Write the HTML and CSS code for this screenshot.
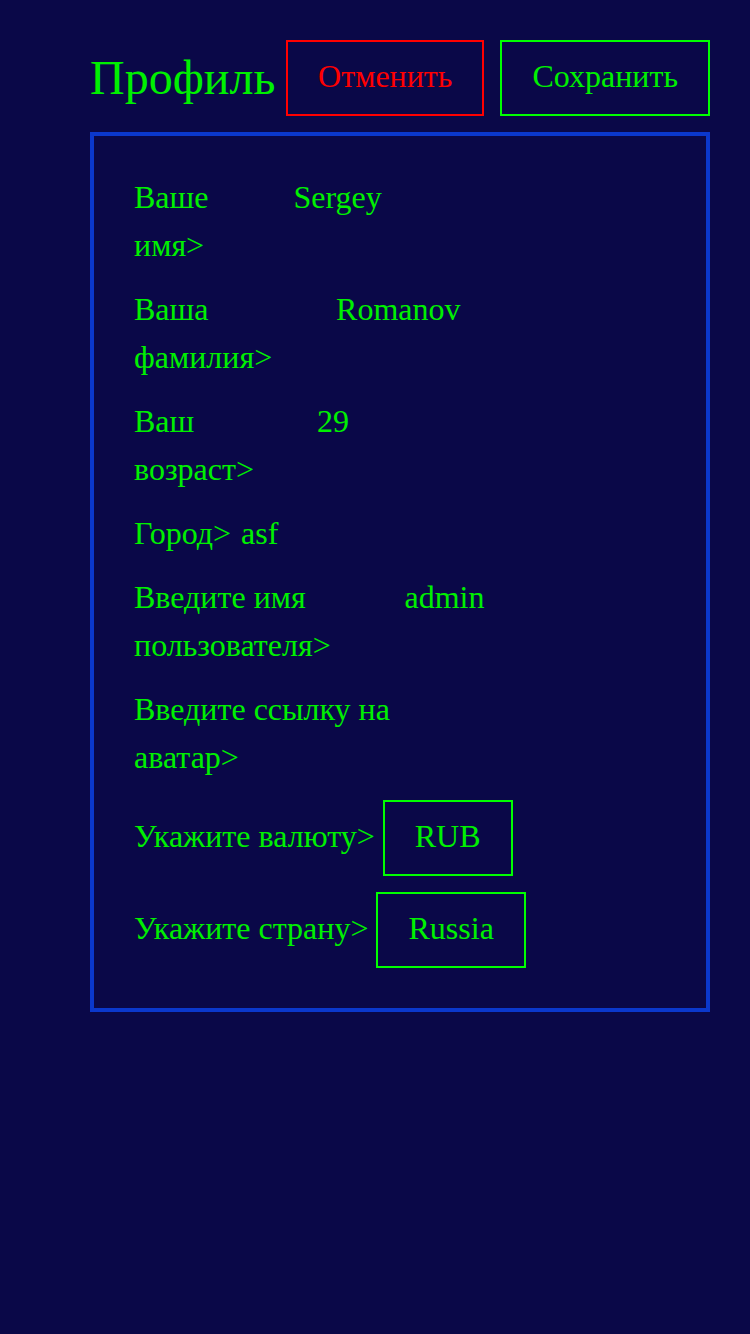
FILE: index.html
```html
<!DOCTYPE html>
<html lang="ru">
<head>
<meta charset="utf-8">
<title>Профиль</title>
<link rel="stylesheet" href="styles.css">
</head>
<body>
<div class="page">
  <header class="header">
    <h1 class="title">Профиль</h1>
    <button class="btn btn-cancel">Отменить</button>
    <button class="btn btn-save">Сохранить</button>
  </header>
  <section class="card">
    <div class="row">
      <span class="label">Ваше имя&gt;</span>
      <span class="value">Sergey</span>
    </div>
    <div class="row">
      <span class="label">Ваша фамилия&gt;</span>
      <span class="value">Romanov</span>
    </div>
    <div class="row">
      <span class="label">Ваш возраст&gt;</span>
      <span class="value">29</span>
    </div>
    <div class="row row-city">
      <span class="label">Город&gt;</span>
      <span class="value">asf</span>
    </div>
    <div class="row">
      <span class="label">Введите имя пользователя&gt;</span>
      <span class="value">admin</span>
    </div>
    <div class="row">
      <span class="label">Введите ссылку на аватар&gt;</span>
      <span class="value"></span>
    </div>
    <div class="row row-select row-first-select">
      <span class="label">Укажите валюту&gt;</span>
      <span class="box">RUB</span>
    </div>
    <div class="row row-select">
      <span class="label">Укажите страну&gt;</span>
      <span class="box">Russia</span>
    </div>
  </section>
</div>
</body>
</html>
```

FILE: styles.css
```css
html, body {
  margin: 0;
  padding: 0;
  background: #0a0848;
  min-height: 100%;
}

body {
  font-family: "Liberation Serif", "Times New Roman", serif;
  color: #00f000;
  width: 750px;
  height: 1334px;
}

.page {
  box-sizing: border-box;
  padding: 40px 40px 0 90px;
  display: flex;
  flex-direction: column;
  gap: 16px;
}

.header {
  display: flex;
  align-items: center;
}

.title {
  flex: none;
  margin: 0;
  font-size: 48px;
  font-weight: normal;
  line-height: 56px;
  color: #00f000;
}

.btn {
  font-family: inherit;
  font-size: 32px;
  line-height: 48px;
  padding: 10px 30px 14px;
  background: transparent;
  border: 2px solid;
  margin: 0;
}

.btn-cancel {
  margin-left: auto;
  color: #ff0000;
  border-color: #ff0000;
}

.btn-save {
  margin-left: 16px;
  color: #00f000;
  border-color: #00ff00;
}

.card {
  border: 4px solid #0b38cc;
  padding: 37px 40px 40px 40px;
  display: flex;
  flex-direction: column;
  gap: 16px;
}

.row {
  display: flex;
  gap: 8px;
  font-size: 32px;
  line-height: 48px;
}

.row-city {
  gap: 10px;
}

.label {
  flex: 0 1 auto;
}

.value {
  flex: 0 1 375px;
  min-width: 0;
}

.row-select {
  align-items: baseline;
}

.row-first-select {
  margin-top: 3px;
}

.box {
  border: 2px solid #00ff00;
  padding: 10px 30px 14px;
}
```
